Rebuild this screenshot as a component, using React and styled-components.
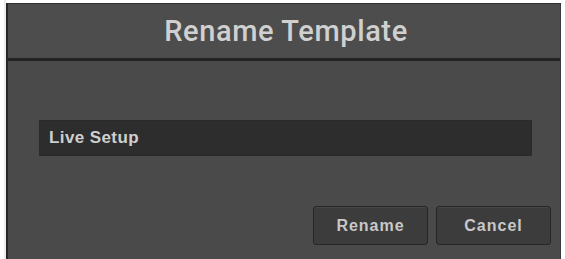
import React from "react";
import styled, { createGlobalStyle } from "styled-components";

const Global = createGlobalStyle`
  html, body { margin: 0; padding: 0; background: #ffffff; }
  body { width: 565px; height: 259px; overflow: hidden; font-family: "Liberation Sans", Arial, sans-serif; }
`;

const Frame = styled.div`
  padding: 3px 0 0 6px;
  height: 259px;
  box-sizing: border-box;
  background: linear-gradient(to right, #ffffff 0, #ffffff 4px, #d8d8d8 5px, #ffffff 6px);
`;

const Dialog = styled.div`
  height: 100%;
  box-sizing: border-box;
  border-left: 2px solid #262626;
  border-top: 1px solid #303030;
  border-right: 1px solid #3a3a3a;
  margin-right: 4px;
  display: flex;
  flex-direction: column;
  background: #4a4a4a;
`;

const TitleBar = styled.div`
  height: 54px;
  display: flex;
  align-items: center;
  justify-content: center;
  background: #4d4d4d;
  border-bottom: 3px solid #232323;
  padding-left: 4px;
`;

const Title = styled.h1`
  margin: 0;
  font-family: Roboto, "Liberation Sans", Arial, sans-serif;
  font-weight: 500;
  font-size: 29px;
  letter-spacing: 0.6px;
  color: #d0d0d0;
`;

const Body = styled.div`
  flex: 1;
  display: flex;
  flex-direction: column;
  padding: 59px 9px 14px 31px;
  background: #4a4a4a;
`;

const Input = styled.div`
  height: 36px;
  margin-right: 19px;
  box-sizing: border-box;
  background: #2d2d2d;
  border: 1px solid #2a2a2a;
  display: flex;
  align-items: center;
  padding-left: 9px;
  font-size: 17px;
  font-weight: bold;
  letter-spacing: 0.4px;
  color: #cfcfcf;
`;

const Buttons = styled.div`
  margin-top: auto;
  display: flex;
  justify-content: flex-end;
  gap: 8px;
`;

const Button = styled.button`
  width: 115px;
  height: 39px;
  box-sizing: border-box;
  background: #3c3c3c;
  border: 1px solid #262626;
  border-radius: 3px;
  box-shadow: inset 0 1px 0 #474747;
  color: #c8c8c8;
  font-family: "Liberation Sans", Arial, sans-serif;
  font-weight: bold;
  font-size: 16px;
  letter-spacing: 1px;
  padding: 0;
`;

export default function App() {
  return (
    <>
      <Global />
      <Frame>
        <Dialog>
          <TitleBar>
            <Title>Rename Template</Title>
          </TitleBar>
          <Body>
            <Input>Live Setup</Input>
            <Buttons>
              <Button>Rename</Button>
              <Button>Cancel</Button>
            </Buttons>
          </Body>
        </Dialog>
      </Frame>
    </>
  );
}
